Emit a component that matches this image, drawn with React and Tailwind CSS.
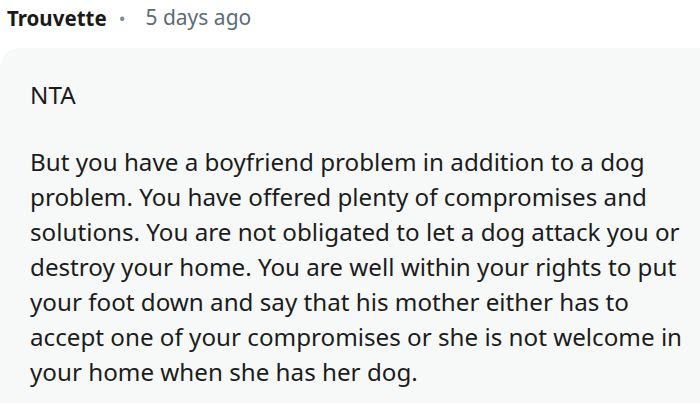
export default function App() {
  const lines = [
    "But you have a boyfriend problem in addition to a dog",
    "problem. You have offered plenty of compromises and",
    "solutions. You are not obligated to let a dog attack you or",
    "destroy your home. You are well within your rights to put",
    "your foot down and say that his mother either has to",
    "accept one of your compromises or she is not welcome in",
    "your home when she has her dog.",
  ];
  return (
    <div className="w-[700px] h-[403px] overflow-hidden bg-white" style={{ fontFamily: '"Noto Sans", sans-serif' }}>
      <div className="flex items-center h-[36px] pl-[7px] text-[21px]">
        <span className="font-bold text-[#1a1a1b] text-[20.5px]">Trouvette</span>
        <span className="ml-[12px] mr-[20px] text-[#7c8a92] text-[18px]">•</span>
        <span className="text-[#5c6c74]">5 days ago</span>
      </div>
      <div className="mt-[12px] w-[720px] rounded-tl-[20px] bg-[#f7f9f9] pl-[30px] pt-[29px] pb-[20px] text-[24.2px] leading-[35px] text-[#1c1c1c]">
        <p className="mb-[32px]">NTA</p>
        <p>
          {lines.map((l, i) => (
            <span key={i} className="block whitespace-nowrap">{l}</span>
          ))}
        </p>
      </div>
    </div>
  );
}
